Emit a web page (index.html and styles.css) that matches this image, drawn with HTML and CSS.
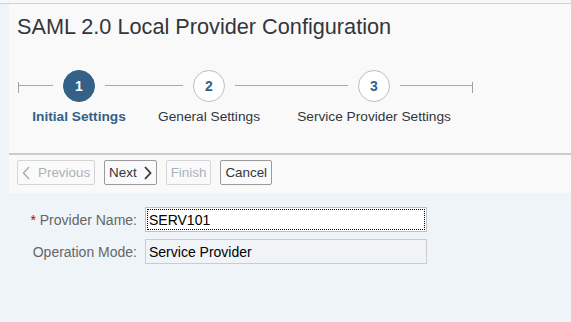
FILE: index.html
```
<!DOCTYPE html>
<html>
<head>
<meta charset="utf-8">
<link rel="stylesheet" href="styles.css">
</head>
<body>
<div class="topline"></div>
<div class="panel">
  <h1 class="title">SAML 2.0 Local Provider Configuration</h1>
  <div class="track">
    <span class="tick"></span>
    <span class="line l1"></span>
    <div class="step active"><span class="circle">1</span><span class="label">Initial Settings</span></div>
    <span class="line l2"></span>
    <div class="step"><span class="circle">2</span><span class="label">General Settings</span></div>
    <span class="line l3"></span>
    <div class="step"><span class="circle">3</span><span class="label">Service Provider Settings</span></div>
    <span class="line l4"></span>
    <span class="tick"></span>
  </div>
  <div class="sep"></div>
  <div class="toolbar">
    <button class="btn disabled prev"><svg width="8" height="14" viewBox="0 0 8 14"><polyline points="7,1 1.5,7 7,13" fill="none" stroke="currentColor" stroke-width="1.6"/></svg><span>Previous</span></button>
    <button class="btn next"><span>Next</span><svg width="8" height="14" viewBox="0 0 8 14"><polyline points="1,1 6.5,7 1,13" fill="none" stroke="currentColor" stroke-width="1.8"/></svg></button>
    <button class="btn disabled">Finish</button>
    <button class="btn">Cancel</button>
  </div>
</div>
<div class="form">
  <label class="flabel"><span class="req">*</span> Provider Name:</label>
  <div class="field focus">SERV101</div>
  <label class="flabel">Operation Mode:</label>
  <div class="field ro">Service Provider</div>
</div>
</body>
</html>
```
FILE: styles.css
```
html, body {
  margin: 0;
  padding: 0;
}
body {
  background: #eff4f9;
  font-family: "Liberation Sans", Arial, sans-serif;
  color: #32363a;
  width: 571px;
  height: 322px;
  overflow: hidden;
}
.topline {
  height: 3px;
  background: #f7f7f7;
  border-bottom: 1px solid #d4d4d4;
}
.panel {
  margin-left: 9px;
  background: #f9f9f9;
  padding: 9px 0 8px 0;
}
.title {
  margin: 0 0 0 8px;
  font-size: 21.7px;
  font-weight: normal;
  line-height: 28px;
  color: #32363a;
}
.track {
  display: flex;
  align-items: flex-start;
  margin: 29px 0 0 9px;
  height: 55px;
}
.tick {
  width: 1px;
  height: 11px;
  background: #a0a0a0;
  margin-top: 12px;
}
.line {
  height: 1px;
  background: #a8a8a8;
  margin-top: 15px;
}
.l1 { width: 34px; margin-right: 10px; }
.l2 { width: 78px; margin: 15px 10px 0; }
.l3 { width: 113px; margin: 15px 10px 0; }
.l4 { width: 72px; margin-left: 10px; }
.step {
  width: 32px;
  display: flex;
  flex-direction: column;
  align-items: center;
}
.circle {
  box-sizing: border-box;
  width: 32px;
  height: 32px;
  border-radius: 50%;
  border: 1px solid #bfbfbf;
  background: #ffffff;
  color: #346187;
  font-weight: bold;
  font-size: 14px;
  display: flex;
  align-items: center;
  justify-content: center;
  flex-shrink: 0;
}
.step.active .circle {
  background: #346187;
  border-color: #346187;
  color: #ffffff;
}
.label {
  white-space: nowrap;
  font-size: 13.7px;
  line-height: 16px;
  margin-top: 7px;
  color: #32363a;
}
.step.active .label {
  font-weight: bold;
  color: #346187;
}
.sep {
  height: 2px;
  background: #cccccc;
  margin-top: 28px;
}
.toolbar {
  display: flex;
  gap: 9px;
  margin: 5px 0 0 8px;
}
.btn {
  box-sizing: border-box;
  height: 25px;
  display: flex;
  align-items: center;
  gap: 7px;
  padding: 0 4px;
  font-family: "Liberation Sans", Arial, sans-serif;
  font-size: 13.4px;
  color: #32363a;
  background: #fafafa;
  border: 1px solid #9a9a9a;
  border-radius: 2px;
}
.btn.disabled {
  color: #a9b3bd;
  border-color: #d5d5d5;
}
.prev { gap: 8px; }
.form {
  display: grid;
  grid-template-columns: 128px 282px;
  column-gap: 8px;
  row-gap: 7px;
  margin: 14px 0 0 9px;
  align-items: center;
}
.flabel {
  text-align: right;
  font-size: 14px;
  color: #666666;
  white-space: nowrap;
}
.req {
  color: #bb0000;
}
.field {
  box-sizing: border-box;
  height: 25px;
  border: 1px solid #bfbfbf;
  font-size: 14px;
  color: #000000;
  padding: 0 3px;
  display: flex;
  align-items: center;
}
.field.focus {
  background: #ffffff;
  outline: 1px dotted #000000;
  outline-offset: -3px;
}
.field.ro {
  background: #f1f4f7;
  border-color: #cccccc;
}
```
